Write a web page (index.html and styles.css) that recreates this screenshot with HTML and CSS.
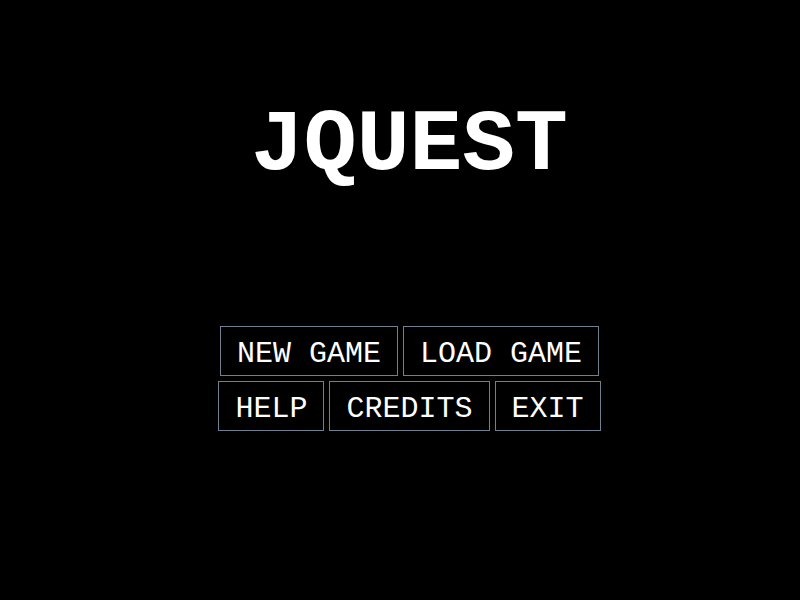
FILE: index.html
```html
<!DOCTYPE html>
<html>
<head>
<meta charset="utf-8">
<title>JQuest</title>
<link rel="stylesheet" href="styles.css">
</head>
<body>
<main class="screen">
  <h1 class="title">JQUEST</h1>
  <nav class="menu">
    <div class="row">
      <button class="btn">NEW GAME</button>
      <button class="btn">LOAD GAME</button>
    </div>
    <div class="row">
      <button class="btn">HELP</button>
      <button class="btn">CREDITS</button>
      <button class="btn">EXIT</button>
    </div>
  </nav>
</main>
</body>
</html>
```
FILE: styles.css
```css
html, body {
  margin: 0;
  padding: 0;
  background: #000;
  height: 100%;
}
.screen {
  padding-left: 19px;
  display: flex;
  flex-direction: column;
  align-items: center;
  font-family: "Courier New", "Liberation Mono", monospace;
  color: #fff;
}
.title {
  margin: 0;
  padding-top: 96px;
  font-family: inherit;
  font-size: 88px;
  line-height: 100px;
  font-weight: bold;
}
.menu {
  margin-top: 130px;
  display: flex;
  flex-direction: column;
  align-items: center;
  gap: 5px;
}
.row {
  display: flex;
  gap: 5px;
}
.btn {
  background: #000;
  color: #fff;
  border: 1px solid #708090;
  font-family: "Courier New", "Liberation Mono", monospace;
  font-size: 30px;
  height: 50px;
  padding: 6px 16px 0;
  margin: 0;
  line-height: 42px;
}
```
